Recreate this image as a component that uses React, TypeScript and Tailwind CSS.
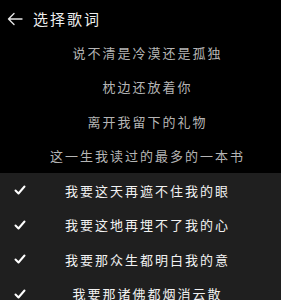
import { useState } from 'react'

const LYRICS = [
  '说不清是冷漠还是孤独',
  '枕边还放着你',
  '离开我留下的礼物',
  '这一生我读过的最多的一本书',
  '我要这天再遮不住我的眼',
  '我要这地再埋不了我的心',
  '我要那众生都明白我的意',
  '我要那诸佛都烟消云散',
]

export default function App() {
  const [selected, setSelected] = useState<number[]>([4, 5, 6, 7])

  const toggle = (i: number) =>
    setSelected(prev => prev.includes(i) ? prev.filter(x => x !== i) : [...prev, i])

  return (
    <div className="w-[281px] h-[300px] overflow-hidden bg-black text-white" style={{ fontFamily: '"Noto Sans CJK SC", "Noto Sans", sans-serif' }}>
      <div className="h-[35px] flex items-center pl-[7px] pt-[3px]">
        <svg width="16" height="14" viewBox="0 0 16 14" fill="none" stroke="#e5e5e5" strokeWidth="1.4" strokeLinecap="round" strokeLinejoin="round">
          <path d="M15 7H1.5M7 1.5 1.5 7 7 12.5" />
        </svg>
        <span className="ml-[10px] text-[15px] tracking-[2px] text-[#eeeeee]">选择歌词</span>
      </div>
      <div>
        {LYRICS.map((line, i) => {
          const on = selected.includes(i)
          return (
            <div key={i} onClick={() => toggle(i)}
              className={`relative h-[34.5px] flex items-center justify-center pl-[14px] ${on ? 'bg-[#1f1f1f]' : 'bg-black'}`}>
              {on && (
                <svg className="absolute left-[14px] top-1/2 -translate-y-1/2" width="12" height="10" viewBox="0 0 12 10" fill="none" stroke="#ffffff" strokeWidth="2" strokeLinecap="round" strokeLinejoin="round">
                  <path d="M1.5 5.5 4.5 8.5 10.5 1.5" />
                </svg>
              )}
              <span className={`text-[13px] tracking-[2px] whitespace-nowrap ${on ? 'text-[#f2f2f2]' : 'text-[#b5b5b5]'}`}>{line}</span>
            </div>
          )
        })}
      </div>
    </div>
  )
}
